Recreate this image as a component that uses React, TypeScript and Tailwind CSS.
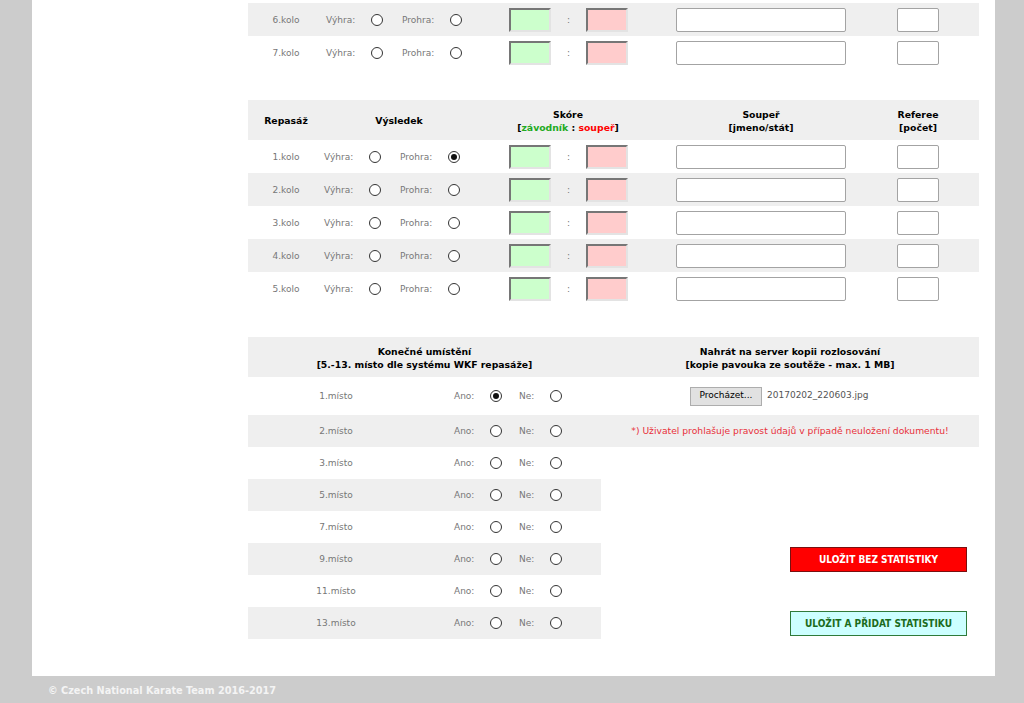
import React from "react";

const font = { fontFamily: '"DejaVu Sans", Verdana, sans-serif' };
const narrow = { fontFamily: '"DejaVu Sans Condensed", "Liberation Sans", sans-serif' };

function Radio({ checked = false }: { checked?: boolean }) {
  return (
    <svg width="12" height="12" viewBox="0 0 12 12" className="shrink-0">
      <circle cx="6" cy="6" r="5.5" fill="#fff" stroke="#333" strokeWidth="1" />
      {checked && <circle cx="6" cy="6" r="3" fill="#111" />}
    </svg>
  );
}

function ScoreBox({ color }: { color: "green" | "red" }) {
  return (
    <div
      className={`w-[42px] h-[24px] border-2 border-t-[#767676] border-l-[#767676] border-r-[#e3e3e3] border-b-[#e3e3e3] ${
        color === "green" ? "bg-[#ccffcc]" : "bg-[#ffcccc]"
      }`}
    />
  );
}

function MatchRow({
  label,
  gray,
  lose,
  shift = 0,
}: {
  label: string;
  gray: boolean;
  lose?: boolean;
  shift?: number;
}) {
  return (
    <div
      className={`flex items-center h-[33px] w-[731px] text-[9px] text-[#777] ${
        gray ? "bg-[#efefef]" : "bg-white"
      }`}
    >
      <div className="w-[76px] text-center pt-[2px]">{label}</div>
      <div
        className={`w-[150px] flex items-center ${shift ? "pl-[2px]" : "pl-0"}`}
      >
        <span className="w-[45px] pt-[2px]">Výhra:</span>
        <Radio />
        <span className="ml-[19px] w-[48px] pt-[2px]">Prohra:</span>
        <Radio checked={lose} />
      </div>
      <div className="w-[188px] flex items-center pl-[35px]">
        <ScoreBox color="green" />
        <span className="w-[35px] text-center pt-[2px]">:</span>
        <ScoreBox color="red" />
      </div>
      <div className="w-[198px] pl-[14px]">
        <div className="w-[170px] h-[24px] border border-[#a3a3a3] rounded-[2px] bg-white" />
      </div>
      <div className="w-[116px] pl-[37px]">
        <div className="w-[42px] h-[24px] border border-[#a3a3a3] rounded-[2px] bg-white" />
      </div>
    </div>
  );
}

function PlaceCell({
  label,
  gray,
  yes,
}: {
  label: string;
  gray: boolean;
  yes?: boolean;
}) {
  return (
    <div
      className={`w-[353px] h-full flex items-center text-[9px] text-[#777] ${
        gray ? "bg-[#efefef]" : "bg-white"
      }`}
    >
      <div className="w-[176px] text-center pt-[1px]">{label}</div>
      <div className="pl-[30px] flex items-center">
        <span className="w-[36px] pt-[2px]">Ano:</span>
        <Radio checked={yes} />
        <span className="ml-[17px] w-[31px] pt-[2px]">Ne:</span>
        <Radio />
      </div>
    </div>
  );
}

export default function App() {
  const repasaz = ["1.kolo", "2.kolo", "3.kolo", "4.kolo", "5.kolo"];
  const places = ["3.místo", "5.místo", "7.místo", "9.místo", "11.místo", "13.místo"];

  return (
    <div className="w-[1024px] min-h-[703px] bg-[#cccccc]" style={font}>
      <div className="ml-[32px] w-[963px] bg-white pt-[3px] pl-[216px] pb-[37px]">
        {/* poslední kola hlavní části */}
        <MatchRow label="6.kolo" gray shift={2} />
        <MatchRow label="7.kolo" gray={false} shift={2} />

        {/* repasáž */}
        <div className="mt-[31px] flex items-center h-[40px] w-[731px] bg-[#efefef] text-[9.3px] font-bold text-black leading-[13px] pt-[1px]">
          <div className="w-[76px] text-center">Repasáž</div>
          <div className="w-[150px] text-center">Výsledek</div>
          <div className="w-[188px] text-center">
            Skóre
            <br />[<span className="text-[#22aa22]">závodník</span> :{" "}
            <span className="text-[#ff0000]">soupeř</span>]
          </div>
          <div className="w-[198px] text-center">
            Soupeř
            <br />
            [jmeno/stát]
          </div>
          <div className="w-[116px] text-center">
            Referee
            <br />
            [počet]
          </div>
        </div>
        {repasaz.map((r, i) => (
          <MatchRow key={r} label={r} gray={i % 2 === 1} lose={i === 0} />
        ))}

        {/* konečné umístění */}
        <div className="mt-[32px] flex items-center h-[40px] w-[731px] bg-[#efefef] text-[9.3px] font-bold text-black leading-[13px] pt-[1px]">
          <div className="w-[353px] text-center">
            Konečné umístění
            <br />
            [5.-13. místo dle systému WKF repasáže]
          </div>
          <div className="w-[378px] text-center">
            Nahrát na server kopii rozlosování
            <br />
            [kopie pavouka ze soutěže - max. 1 MB]
          </div>
        </div>
        <div className="flex h-[38px] w-[731px]">
          <PlaceCell label="1.místo" gray={false} yes />
          <div className="w-[378px] flex items-center pl-[89px] text-[9px]">
            <button className="h-[19px] w-[72px] bg-[#e1e1e1] border border-[#adadad] text-black">
              Procházet...
            </button>
            <span className="ml-[5px] text-[#555]">20170202_220603.jpg</span>
          </div>
        </div>
        <div className="flex h-[32px] w-[731px]">
          <PlaceCell label="2.místo" gray />
          <div className="w-[378px] bg-[#efefef] flex items-center justify-center text-[9.2px] text-[#e8303a]">
            *) Uživatel prohlašuje pravost údajů v případě neuložení dokumentu!
          </div>
        </div>
        {places.map((p, i) => (
          <div key={p} className="flex h-[32px] w-[731px]">
            <PlaceCell label={p} gray={i % 2 === 1} />
            <div className="w-[378px] flex items-center">
              {p === "9.místo" && (
                <button
                  className="ml-[189px] w-[177px] h-[25px] bg-[#ff0000] border border-[#7a1010] text-white font-bold text-[10px]"
                  style={narrow}
                >
                  ULOŽIT BEZ STATISTIKY
                </button>
              )}
              {p === "13.místo" && (
                <button
                  className="ml-[189px] w-[177px] h-[25px] bg-[#ccffff] border border-[#2f7a3a] text-[#1b6b1b] font-bold text-[10px]"
                  style={narrow}
                >
                  ULOŽIT A PŘIDAT STATISTIKU
                </button>
              )}
            </div>
          </div>
        ))}
      </div>
      <div
        className="pl-[48px] pt-[7px] text-[10.8px] font-bold text-[#f4f4f4]"
        style={{ fontFamily: '"DejaVu Sans Condensed", "DejaVu Sans", sans-serif' }}
      >
        © Czech National Karate Team 2016-2017
      </div>
    </div>
  );
}
